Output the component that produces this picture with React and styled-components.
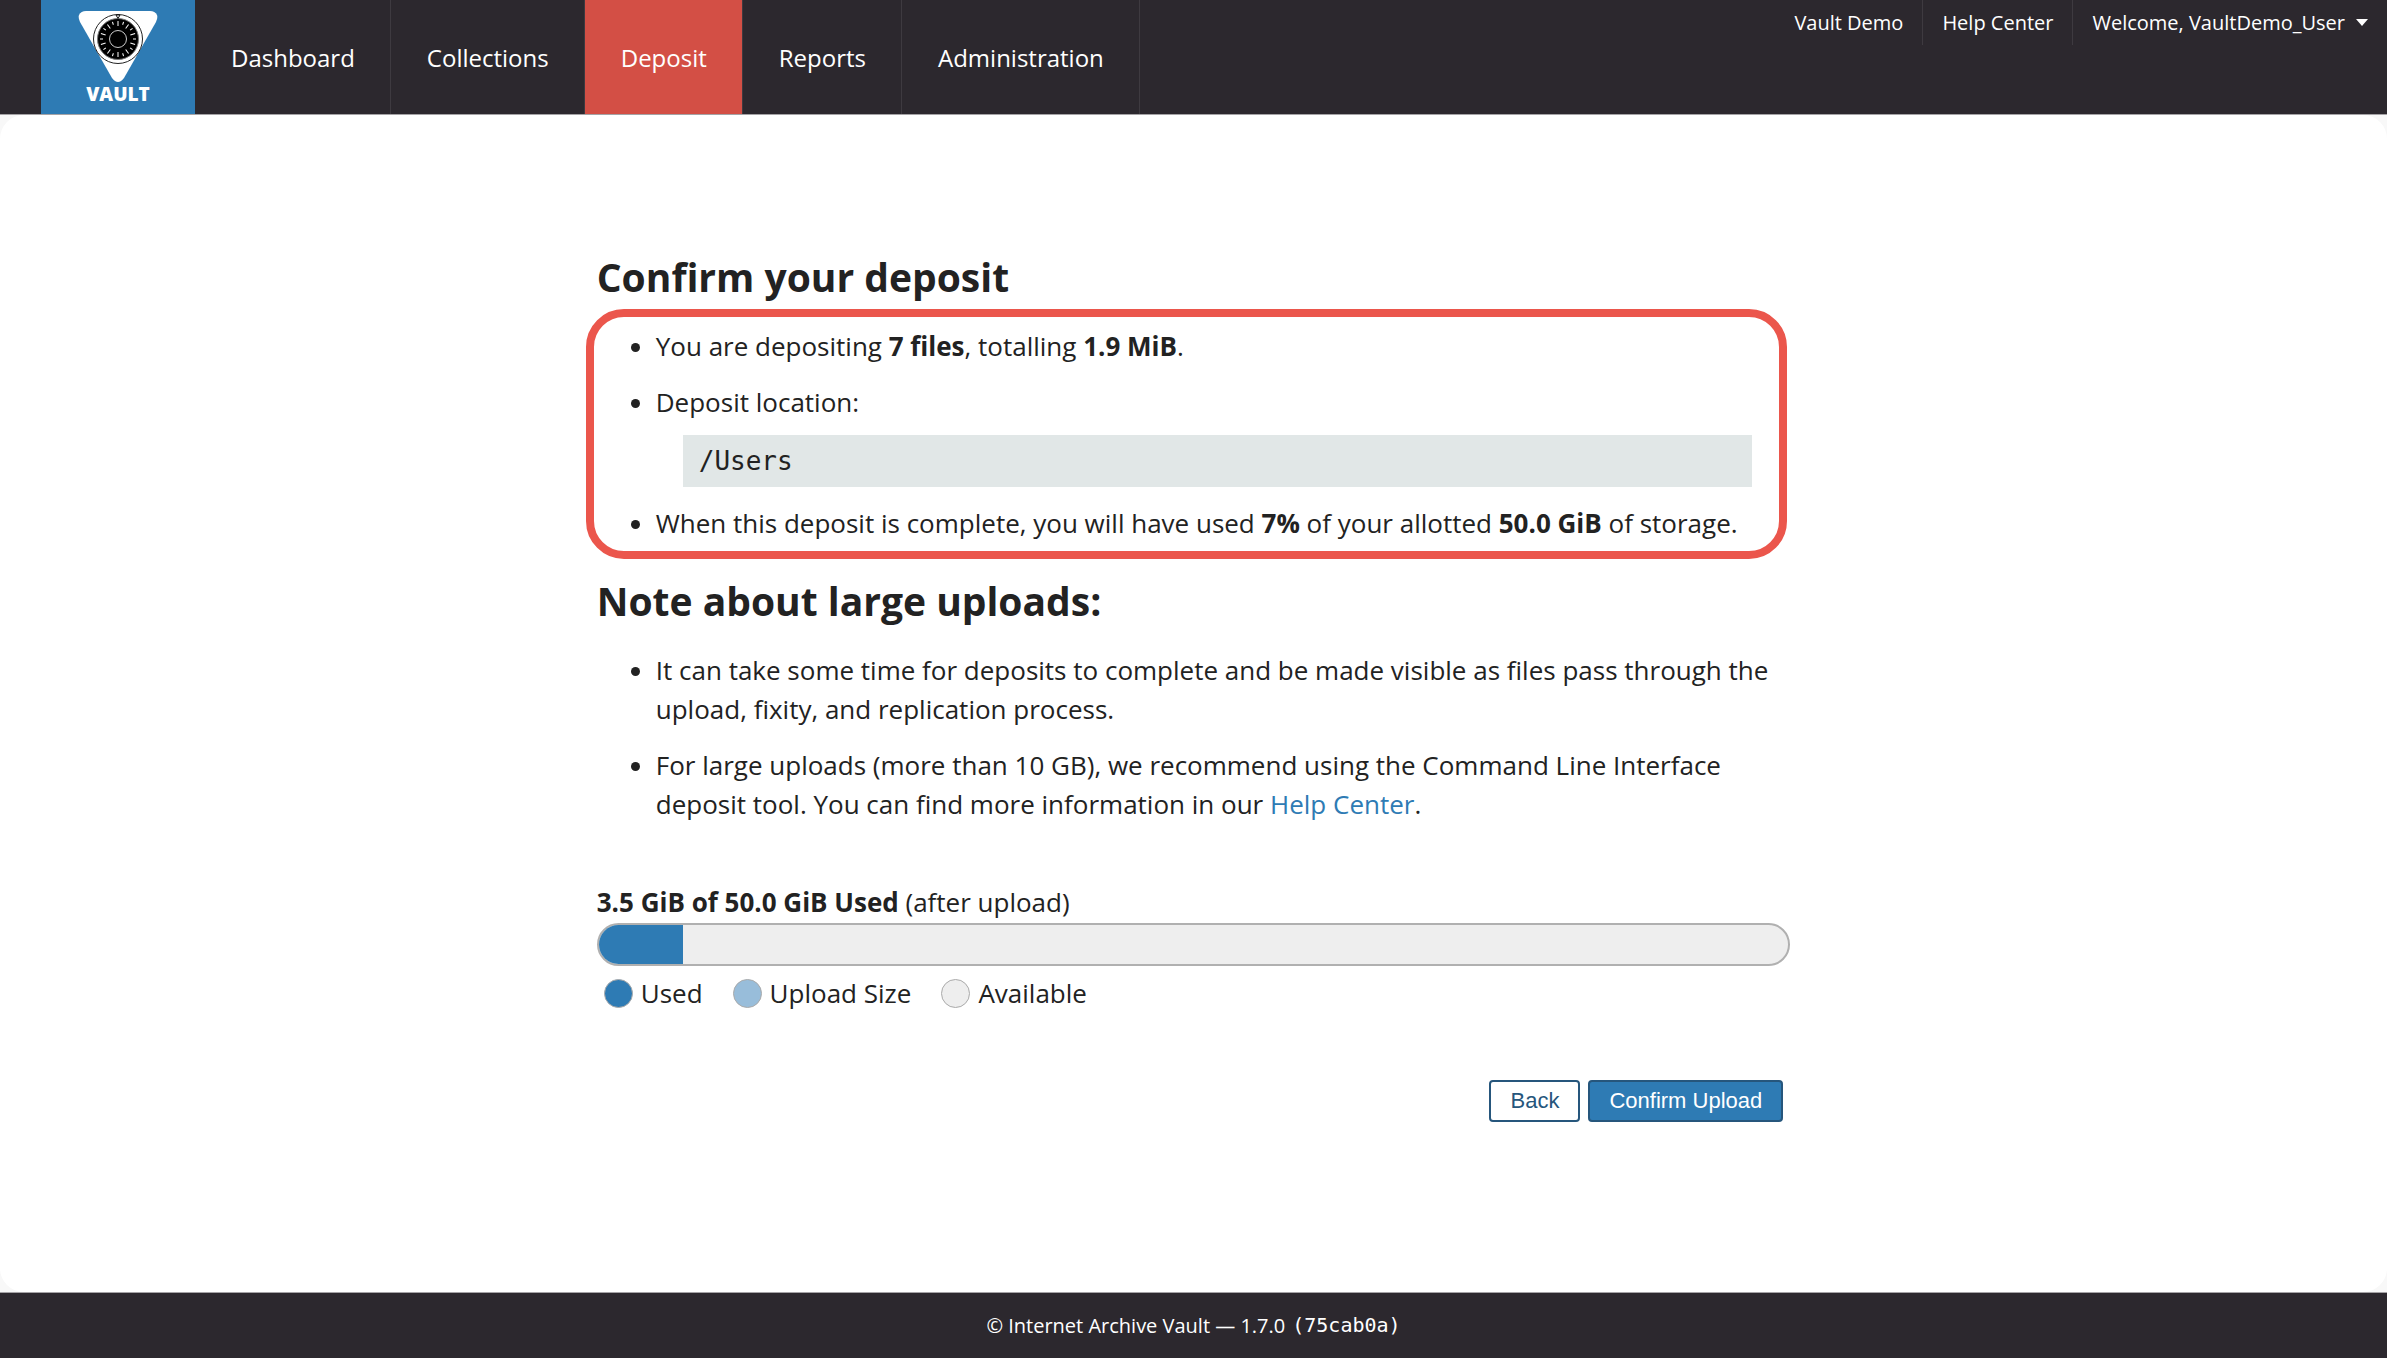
import React from "react";
import styled, { createGlobalStyle } from "styled-components";

const GlobalStyle = createGlobalStyle`
  * {
    box-sizing: border-box;
  }

  body {
    margin: 0;
    background: #f8f8f8;
    color: #222;
    font-family: "Open Sans", sans-serif;
    font-size: 26px;
    line-height: 39px;
  }
`;

const Page = styled.div`
  display: flex;
  flex-direction: column;
  min-height: 100vh;
`;

const Header = styled.header`
  display: flex;
  align-items: stretch;
  min-height: 115px;
  padding-left: 41px;
  background: #2c282e;
  border-bottom: 1px solid #a5a3a6;
`;

const LogoLink = styled.a`
  display: flex;
  flex-direction: column;
  align-items: center;
  width: 154px;
  padding-top: 10px;
  background: #2e7bb4;
  color: #fff;
  font-size: 19px;
  font-weight: 800;
  line-height: 20px;
  text-decoration: none;
`;

const MainNav = styled.nav`
  display: flex;
`;

const NavLink = styled.a`
  display: flex;
  align-items: center;
  padding: 0 35px 0 36px;
  border-right: 1px solid #3e3a40;
  background: ${(props) => (props.$active ? "#d34f45" : "transparent")};
  color: #fff;
  font-size: 24px;
  text-decoration: none;
`;

const UserNav = styled.nav`
  display: flex;
  align-items: flex-start;
  margin-left: auto;
`;

const UserLink = styled.a`
  display: flex;
  align-items: center;
  gap: 11px;
  height: 45px;
  padding: 0 19px;
  color: #fff;
  font-size: 20px;
  text-decoration: none;

  & + & {
    border-left: 1px solid #3e3a40;
  }
`;

const Caret = styled.span`
  border: 6px solid transparent;
  border-top: 7px solid #fff;
  border-bottom: 0;
`;

const Main = styled.main`
  flex: 1;
  padding: 135px 25% 40px;
  border-radius: 24px;
  background: #fff;
`;

const Title = styled.h2`
  margin: 0;
  font-size: 39px;
  font-weight: 700;
  line-height: 54px;
`;

const Summary = styled.div`
  position: relative;
  margin-bottom: 31px;
`;

const Highlight = styled.div`
  position: absolute;
  inset: -18px 3px -16px -11px;
  border: 8px solid #eb564c;
  border-radius: 38px;
  pointer-events: none;
`;

const List = styled.ul`
  display: flex;
  flex-direction: column;
  gap: 17px;
  margin: 23px 0 0;
  padding-left: 59px;
`;

const Location = styled.pre`
  margin: 13px 38px 0 27px;
  padding: 7px 16px 6px;
  background: #e1e7e7;
  font-family: "DejaVu Sans Mono", monospace;
  font-size: 26px;
`;

const TextLink = styled.a`
  color: #2e7bb4;
  text-decoration: none;
`;

const Usage = styled.section`
  margin-top: 59px;
`;

const Bar = styled.div`
  display: flex;
  height: 43px;
  margin-top: 1px;
  overflow: hidden;
  border: 2px solid #b0b0b0;
  border-radius: 22px;
  background: #eee;
`;

const BarFill = styled.div`
  background: #2e7bb4;
`;

const Legend = styled.div`
  display: flex;
  gap: 30px;
  margin-top: 8px;
  padding-left: 7px;
`;

const LegendItem = styled.span`
  display: flex;
  align-items: center;
  gap: 8px;
`;

const Dot = styled.span`
  width: 29px;
  height: 29px;
  border: 1px solid #aaa;
  border-radius: 50%;
  background: ${(props) => props.$color};
`;

const Actions = styled.div`
  display: flex;
  justify-content: flex-end;
  gap: 8px;
  margin-top: 67px;
  padding-right: 7px;
`;

const Button = styled.button`
  height: 42px;
  padding: 0 19px;
  border: 2px solid #26567c;
  border-radius: 4px;
  background: ${(props) => (props.$primary ? "#2e7bb4" : "#fff")};
  color: ${(props) => (props.$primary ? "#fff" : "#26567c")};
  font-family: "Liberation Sans", Arial, sans-serif;
  font-size: 22px;
  cursor: pointer;
`;

const Footer = styled.footer`
  display: flex;
  justify-content: center;
  align-items: center;
  gap: 7px;
  min-height: 66px;
  border-top: 1px solid #a5a3a6;
  background: #2c282e;
  color: #fff;
  font-size: 20px;
`;

const Version = styled.code`
  font-family: "DejaVu Sans Mono", monospace;
  font-size: 20px;
`;

const navItems = [
  "Dashboard",
  "Collections",
  "Deposit",
  "Reports",
  "Administration",
];

const legendItems = [
  { label: "Used", color: "#2e7bb4" },
  { label: "Upload Size", color: "#98bdda" },
  { label: "Available", color: "#eee" },
];

const usedPercent = 7.1;

function VaultLogo() {
  const ticks = Array.from({ length: 20 }, (_, i) => i * 18);

  return (
    <svg width="80" height="74" viewBox="0 0 80 74" aria-hidden="true">
      <path
        d="M8 1H72Q77 1 79 5Q80 8 78 12L46 68Q40 76 34 68L2 12Q0 8 1 5Q3 1 8 1Z"
        fill="#fff"
      />
      <circle cx="40" cy="29" r="24.5" fill="#fff" stroke="#222" />
      <circle cx="40" cy="29" r="20.5" fill="#000" stroke="#777" />
      {ticks.map((angle) => (
        <path
          key={angle}
          d={angle % 36 === 0 ? "M40 11V16" : "M40 11V14"}
          stroke="#fff"
          transform={`rotate(${angle} 40 29)`}
        />
      ))}
      <circle cx="40" cy="29" r="8.5" fill="#000" stroke="#ccc" />
      <path d="M38 5H42L40 8.5Z" fill="#fff" stroke="#111" />
    </svg>
  );
}

export default function App() {
  return (
    <Page>
      <GlobalStyle />
      <Header>
        <LogoLink href="#">
          <VaultLogo />
          VAULT
        </LogoLink>
        <MainNav>
          {navItems.map((item) => (
            <NavLink key={item} href="#" $active={item === "Deposit"}>
              {item}
            </NavLink>
          ))}
        </MainNav>
        <UserNav>
          <UserLink href="#">Vault Demo</UserLink>
          <UserLink href="#">Help Center</UserLink>
          <UserLink href="#">
            Welcome, VaultDemo_User
            <Caret />
          </UserLink>
        </UserNav>
      </Header>

      <Main>
        <Title>Confirm your deposit</Title>
        <Summary>
          <List>
            <li>
              You are depositing <b>7 files</b>, totalling <b>1.9 MiB</b>.
            </li>
            <li>
              Deposit location:
              <Location>/Users</Location>
            </li>
            <li>
              When this deposit is complete, you will have used <b>7%</b> of
              your allotted <b>50.0 GiB</b> of storage.
            </li>
          </List>
          <Highlight />
        </Summary>

        <Title>Note about large uploads:</Title>
        <List>
          <li>
            It can take some time for deposits to complete and be made visible
            as files pass through the upload, fixity, and replication process.
          </li>
          <li>
            For large uploads (more than 10 GB), we recommend using the Command
            Line Interface deposit tool. You can find more information in our{" "}
            <TextLink href="#">Help Center</TextLink>.
          </li>
        </List>

        <Usage>
          <b>3.5 GiB of 50.0 GiB Used</b> (after upload)
          <Bar>
            <BarFill style={{ width: `${usedPercent}%` }} />
          </Bar>
          <Legend>
            {legendItems.map((item) => (
              <LegendItem key={item.label}>
                <Dot $color={item.color} />
                {item.label}
              </LegendItem>
            ))}
          </Legend>
        </Usage>

        <Actions>
          <Button type="button">Back</Button>
          <Button type="button" $primary>
            Confirm Upload
          </Button>
        </Actions>
      </Main>

      <Footer>
        <span>© Internet Archive Vault — 1.7.0</span>
        <Version>(75cab0a)</Version>
      </Footer>
    </Page>
  );
}
